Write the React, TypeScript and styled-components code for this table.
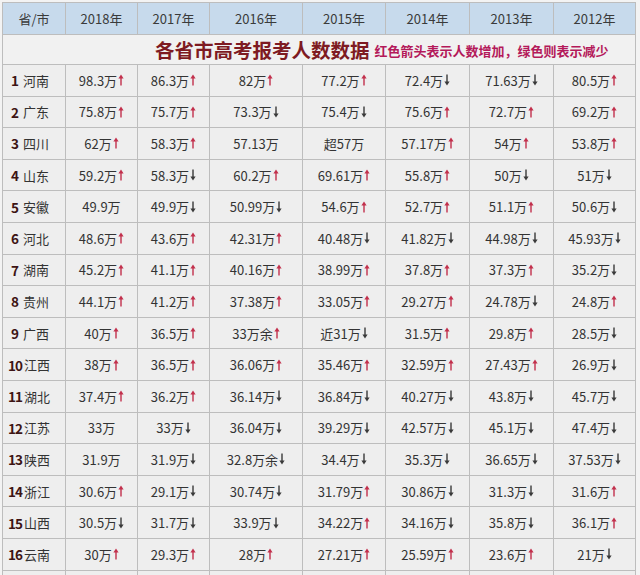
import styled, { createGlobalStyle } from 'styled-components';

type Trend = 'up' | 'down' | '';
type Cell = { value: string; trend: Trend };
type Row = { rank: number; province: string; cells: Cell[] };

const years = ['2018年', '2017年', '2016年', '2015年', '2014年', '2013年', '2012年'];

// "98.3万↑" -> value + trend
function parse(raw: string): Cell {
  if (raw.endsWith('↑')) return { value: raw.slice(0, -1), trend: 'up' };
  if (raw.endsWith('↓')) return { value: raw.slice(0, -1), trend: 'down' };
  return { value: raw, trend: '' };
}

const rawRows: [string, string[]][] = [
  ['河南', ['98.3万↑', '86.3万↑', '82万↑', '77.2万↑', '72.4万↓', '71.63万↓', '80.5万↑']],
  ['广东', ['75.8万↑', '75.7万↑', '73.3万↓', '75.4万↓', '75.6万↑', '72.7万↑', '69.2万↑']],
  ['四川', ['62万↑', '58.3万↑', '57.13万', '超57万', '57.17万↑', '54万↑', '53.8万↑']],
  ['山东', ['59.2万↑', '58.3万↓', '60.2万↑', '69.61万↑', '55.8万↑', '50万↓', '51万↓']],
  ['安徽', ['49.9万', '49.9万↓', '50.99万↓', '54.6万↑', '52.7万↑', '51.1万↑', '50.6万↓']],
  ['河北', ['48.6万↑', '43.6万↑', '42.31万↑', '40.48万↓', '41.82万↓', '44.98万↓', '45.93万↓']],
  ['湖南', ['45.2万↑', '41.1万↑', '40.16万↑', '38.99万↑', '37.8万↑', '37.3万↑', '35.2万↓']],
  ['贵州', ['44.1万↑', '41.2万↑', '37.38万↑', '33.05万↑', '29.27万↑', '24.78万↓', '24.8万↑']],
  ['广西', ['40万↑', '36.5万↑', '33万余↑', '近31万↓', '31.5万↑', '29.8万↑', '28.5万↓']],
  ['江西', ['38万↑', '36.5万↑', '36.06万↑', '35.46万↑', '32.59万↑', '27.43万↑', '26.9万↓']],
  ['湖北', ['37.4万↑', '36.2万↑', '36.14万↓', '36.84万↓', '40.27万↓', '43.8万↓', '45.7万↓']],
  ['江苏', ['33万', '33万↓', '36.04万↓', '39.29万↓', '42.57万↓', '45.1万↓', '47.4万↓']],
  ['陕西', ['31.9万', '31.9万↓', '32.8万余↓', '34.4万↓', '35.3万↓', '36.65万↓', '37.53万↓']],
  ['浙江', ['30.6万↑', '29.1万↓', '30.74万↓', '31.79万↑', '30.86万↓', '31.3万↓', '31.6万↑']],
  ['山西', ['30.5万↓', '31.7万↓', '33.9万↓', '34.22万↑', '34.16万↓', '35.8万↓', '36.1万↑']],
  ['云南', ['30万↑', '29.3万↑', '28万↑', '27.21万↑', '25.59万↑', '23.6万↑', '21万↓']],
];

const rows: Row[] = rawRows.map(([province, cells], i) => ({
  rank: i + 1,
  province,
  cells: cells.map(parse),
}));

function Arrow({ trend }: { trend: Trend }) {
  if (!trend) return null;
  const up = trend === 'up';
  return (
    <ArrowIcon width="6" height="12" viewBox="0 0 6 12" $up={up}>
      {up ? (
        <>
          <path d="M3 0.5 L5.6 4.5 L0.4 4.5 Z" />
          <rect x="2.3" y="4" width="1.4" height="7.5" />
        </>
      ) : (
        <>
          <rect x="2.3" y="0.5" width="1.4" height="7.5" />
          <path d="M3 11.5 L5.6 7.5 L0.4 7.5 Z" />
        </>
      )}
    </ArrowIcon>
  );
}

export default function App() {
  return (
    <>
      <GlobalStyle />
      <Table>
        <HeadCell>省/市</HeadCell>
        {years.map((y) => (
          <HeadCell key={y}>{y}</HeadCell>
        ))}

        <TitleCell>
          <Title>各省市高考报考人数数据</Title>
          <Subtitle>红色箭头表示人数增加，绿色则表示减少</Subtitle>
        </TitleCell>

        {rows.map((row) => (
          <RowGroup key={row.rank}>
            <NameCell>
              <Rank $wide={row.rank >= 10}>{row.rank}</Rank>
              {row.province}
            </NameCell>
            {row.cells.map((c, i) => (
              <DataCell key={i}>
                {c.value}
                <Arrow trend={c.trend} />
              </DataCell>
            ))}
          </RowGroup>
        ))}

        <RowGroup>
          {Array.from({ length: 8 }).map((_, i) => (
            <DataCell key={i} />
          ))}
        </RowGroup>
      </Table>
    </>
  );
}

const GlobalStyle = createGlobalStyle`
  html, body {
    margin: 0;
    padding: 0;
    background: #f3f3f3;
    overflow: hidden;
  }
  body {
    font-family: "Noto Sans CJK SC", "Noto Sans", sans-serif;
    color: #333333;
  }
`;

const Table = styled.div`
  display: grid;
  grid-template-columns: 62px 71px 71px 92px 82px 83px 83px 81px;
  grid-template-rows: 31px 29px repeat(17, 30.6px);
  gap: 1px;
  padding: 1px;
  margin: 2px 0 0 2px;
  width: max-content;
  background: #bdbdbd;
`;

const HeadCell = styled.div`
  display: flex;
  align-items: center;
  justify-content: center;
  background: #c7daec;
  font-size: 13px;
  color: #3a3a3a;
`;

const TitleCell = styled.div`
  grid-column: 1 / -1;
  display: flex;
  align-items: center;
  gap: 5px;
  padding-left: 152px;
  background: #f1f1f1;
`;

const Title = styled.span`
  font-size: 19.5px;
  font-weight: bold;
  color: #7e1a22;
`;

const Subtitle = styled.span`
  font-size: 13px;
  font-weight: bold;
  color: #b4195a;
  padding-top: 2px;
`;

const RowGroup = styled.div`
  display: contents;
`;

const DataCell = styled.div`
  display: flex;
  align-items: center;
  justify-content: center;
  background: #eeeeee;
  font-size: 13px;
  color: #333333;
  white-space: nowrap;
`;

const NameCell = styled(DataCell)`
  justify-content: flex-start;
  padding-left: 5px;
`;

const Rank = styled.span<{ $wide: boolean }>`
  display: inline-block;
  min-width: ${(p) => (p.$wide ? 16 : 12)}px;
  padding-left: ${(p) => (p.$wide ? 0 : 3)}px;
  font-weight: bold;
  font-size: 13.5px;
  color: #3d1414;
  letter-spacing: -1px;
`;

const ArrowIcon = styled.svg<{ $up: boolean }>`
  margin-left: 1px;
  fill: ${(p) => (p.$up ? '#c2304c' : '#3a3a3a')};
`;
